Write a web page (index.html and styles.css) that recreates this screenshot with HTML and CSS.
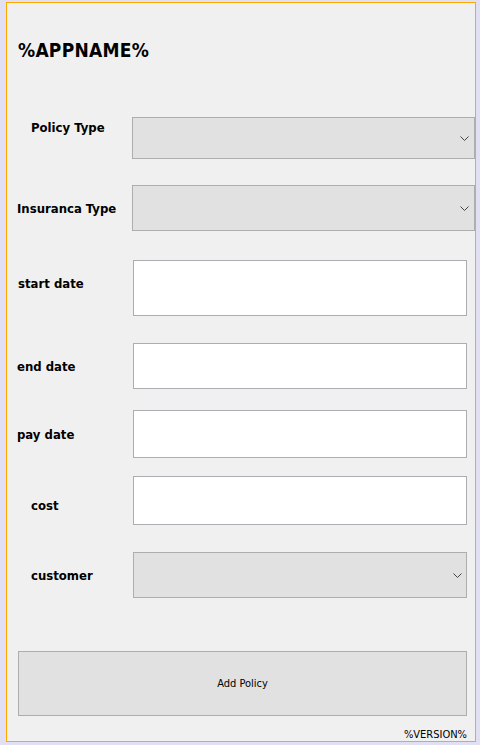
FILE: index.html
```html
<!DOCTYPE html>
<html>
<head>
<meta charset="utf-8">
<link rel="stylesheet" href="styles.css">
</head>
<body>
<div class="frame">
  <div class="title">%APPNAME%</div>

  <div class="row r1">
    <div class="label ind">Policy Type</div>
    <div class="combo wide"><svg class="chev" width="9" height="5" viewBox="0 0 9 5"><polyline points="0.5,0.5 4.5,4.5 8.5,0.5" fill="none" stroke="#444" stroke-width="1"/></svg></div>
  </div>

  <div class="row r2">
    <div class="label">Insuranca Type</div>
    <div class="combo wide tall"><svg class="chev" width="9" height="5" viewBox="0 0 9 5"><polyline points="0.5,0.5 4.5,4.5 8.5,0.5" fill="none" stroke="#444" stroke-width="1"/></svg></div>
  </div>

  <div class="row r3">
    <div class="label l18">start date</div>
    <div class="field h56"></div>
  </div>

  <div class="row r4">
    <div class="label">end date</div>
    <div class="field h46"></div>
  </div>

  <div class="row r5">
    <div class="label">pay date</div>
    <div class="field h48"></div>
  </div>

  <div class="row r6">
    <div class="label ind">cost</div>
    <div class="field h49"></div>
  </div>

  <div class="row r7">
    <div class="label ind">customer</div>
    <div class="combo narrow"><svg class="chev" width="9" height="5" viewBox="0 0 9 5"><polyline points="0.5,0.5 4.5,4.5 8.5,0.5" fill="none" stroke="#444" stroke-width="1"/></svg></div>
  </div>

  <div class="button">Add Policy</div>
  <div class="version">%VERSION%</div>
</div>
</body>
</html>
```

FILE: styles.css
```css
html, body {
  margin: 0;
  padding: 0;
}
body {
  background: #e0e0f2;
  width: 480px;
  height: 745px;
  overflow: hidden;
  font-family: "DejaVu Sans Condensed", "DejaVu Sans", sans-serif;
  color: #000;
}
.frame {
  box-sizing: border-box;
  margin-left: 6px;
  margin-top: 2px;
  width: 470px;
  height: 740px;
  border: 1px solid #ffa800;
  background: #f0f0f0;
  display: flex;
  flex-direction: column;
}
.title {
  margin-top: 35px;
  padding-left: 11px;
  font-size: 19px;
  line-height: 24px;
  font-weight: bold;
  letter-spacing: 0.25px;
}
.row {
  display: flex;
  align-items: flex-start;
}
.label {
  flex: 0 0 125px;
  box-sizing: border-box;
  padding-left: 10px;
  font-size: 13px;
  line-height: 16px;
  font-weight: bold;
  white-space: nowrap;
}
.label.ind { padding-left: 24px; }
.label.l18 { padding-left: 11px; }

.r1 { margin-top: 55px; }
.r1 .label { padding-top: 3px; }
.r2 { margin-top: 26px; }
.r2 .label { padding-top: 16px; }
.r3 { margin-top: 29px; }
.r3 .label { padding-top: 16px; }
.r4 { margin-top: 27px; }
.r4 .label { padding-top: 16px; }
.r5 { margin-top: 21px; }
.r5 .label { padding-top: 17px; }
.r6 { margin-top: 18px; }
.r6 .label { padding-top: 22px; }
.r7 { margin-top: 27px; }
.r7 .label { padding-top: 16px; }

.combo {
  box-sizing: border-box;
  background: #e1e1e1;
  border: 1px solid #adadad;
  display: flex;
  align-items: center;
  justify-content: flex-end;
  padding-right: 5px;
}
.combo.wide {
  width: 343px;
  height: 42px;
}
.combo.wide.tall { height: 46px; }
.combo.narrow {
  margin-left: 1px;
  width: 334px;
  height: 46px;
  padding-right: 4px;
}
.chev { display: block; }

.field {
  box-sizing: border-box;
  margin-left: 1px;
  width: 334px;
  background: #fff;
  border: 1px solid #abadb3;
}
.h56 { height: 56px; }
.h46 { height: 46px; }
.h48 { height: 48px; }
.h49 { height: 49px; }

.button {
  box-sizing: border-box;
  margin-top: 53px;
  margin-left: 11px;
  width: 449px;
  height: 65px;
  background: #e1e1e1;
  border: 1px solid #adadad;
  display: flex;
  align-items: center;
  justify-content: center;
  font-size: 11px;
}
.version {
  margin-top: auto;
  width: 460px;
  text-align: right;
  font-size: 11px;
  line-height: 13px;
}
```
